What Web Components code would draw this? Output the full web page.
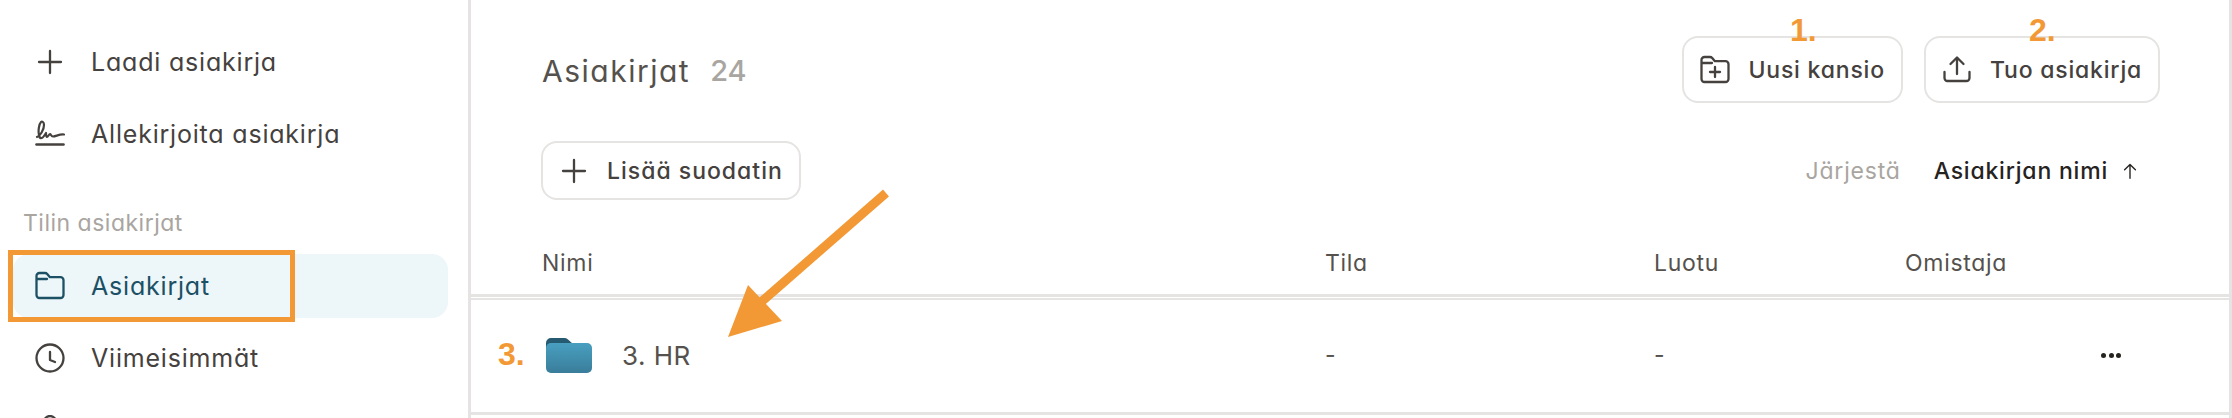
<!DOCTYPE html>
<html lang="fi">
<head>
<meta charset="utf-8">
<title>Asiakirjat</title>
<style>
	html, body {
		margin: 0;
		height: 418px;
		overflow: hidden;
		background: #fff;
	}
	body {
		font-family: Inter, "Noto Sans", sans-serif;
		font-feature-settings: "cv11";
		color: #45413e;
	}
</style>
</head>
<body>
<docs-page>
	<docs-sidebar slot="sidebar">
		<nav-item icon="plus">Laadi asiakirja</nav-item>
		<nav-item icon="sign">Allekirjoita asiakirja</nav-item>
		<nav-label>Tilin asiakirjat</nav-label>
		<nav-item icon="folder" active>Asiakirjat</nav-item>
		<nav-item icon="clock">Viimeisimmät</nav-item>
		<nav-item icon="user"></nav-item>
	</docs-sidebar>
	<docs-main slot="main">
		<docs-toolbar>
			<span slot="title">Asiakirjat</span>
			<span slot="count">24</span>
			<docs-button slot="actions" icon="folder-plus">Uusi kansio</docs-button>
			<docs-button slot="actions" icon="upload">Tuo asiakirja</docs-button>
		</docs-toolbar>
		<docs-filterbar></docs-filterbar>
		<docs-table></docs-table>
	</docs-main>
	<docs-annotations slot="over"></docs-annotations>
</docs-page>

<script>
	// shared icon set, stroke icons use currentColor
	const icons = {
		plus: '<path d="M15 4v22M4 15h22"/>',
		sign: '<path d="M1.500 25.500h27" stroke-width="2.600"/><path d="M2 18C5 17 9 11 9 6C9 3 7 2 6 3C4 5 3 12 4 16C4.500 20 7 20 9 17L11 14C11 16 11 18 12 18C13 18 14 15 15 15C16 15 16 17.500 18 17.500C21 17.500 24 15 29 15.500" stroke-width="2.200"/>',
		folder: '<path d="M1.500 8V5a3 3 0 0 1 3-3h5.500a3 3 0 0 1 2.200 1l2.300 2.800a1 1 0 0 0 .8.400H25.500a3 3 0 0 1 3 3V24a3 3 0 0 1-3 3h-21a3 3 0 0 1-3-3V8zM1.500 8H12"/>',
		clock: '<circle cx="15" cy="15" r="13.500"/><path d="M15 9v8l5 2"/>',
		user: '<circle cx="15" cy="7" r="6"/><path d="M4 28c1-7 6-10 11-10s10 3 11 10"/>',
		'folder-plus': '<path d="M1.500 8V5a3 3 0 0 1 3-3h5.500a3 3 0 0 1 2.200 1l2.300 2.800a1 1 0 0 0 .8.400H25.500a3 3 0 0 1 3 3V24a3 3 0 0 1-3 3h-21a3 3 0 0 1-3-3V8zM1.500 8H12M15 12v10M10 17h10"/>',
		upload: '<path d="M15 19V3M8.500 9L15 2.500 21.500 9M2.500 17v6a3 3 0 0 0 3 3h19a3 3 0 0 0 3-3v-6"/>',
		up: '<path d="M15 27V4M6 13l9-9 9 9"/>'
	};

	const iconSvg = (name, size = 30) =>
		`<svg width="${size}" height="${size}" viewBox="0 0 30 30" fill="none" stroke="currentColor" stroke-width="2.300" stroke-linecap="round" stroke-linejoin="round">${icons[name] || ''}</svg>`;

	class DocsPage extends HTMLElement {
		constructor() {
			super();
			this.attachShadow({mode: 'open'});
			this.shadowRoot.innerHTML = `
				<style>
					:host {
						display: grid;
						grid-template-columns: 471px 1fr;
						position: relative;
						height: 418px;
						overflow: hidden;
					}
					#side { border-right: 3px solid #e5e4e3; }
					#main { border-right: 3px solid #e5e4e3; min-width: 0; }
				</style>
				<div id="side"><slot name="sidebar"></slot></div>
				<div id="main"><slot name="main"></slot></div>
				<slot name="over"></slot>
			`;
		}
	}

	class DocsSidebar extends HTMLElement {
		constructor() {
			super();
			this.attachShadow({mode: 'open'});
			this.shadowRoot.innerHTML = `
				<style>
					:host {
						display: flex;
						flex-direction: column;
						gap: 8px;
						padding: 30px 20px 0 13px;
					}
				</style>
				<slot></slot>
			`;
		}
	}

	class NavItem extends HTMLElement {
		constructor() {
			super();
			this.attachShadow({mode: 'open'});
			this.shadowRoot.innerHTML = `
				<style>
					:host {
						display: flex;
						align-items: center;
						gap: 26px;
						height: 64px;
						flex: none;
						padding-left: 22px;
						border-radius: 16px;
						font-size: 25px;
						letter-spacing: .8px;
						color: #45413e;
					}
					:host([active]) {
						background: #edf6f9;
						color: #1c5064;
					}
					svg { display: block; flex: none; }
				</style>
				${iconSvg(this.getAttribute('icon'))}
				<span><slot></slot></span>
			`;
		}
	}

	class NavLabel extends HTMLElement {
		constructor() {
			super();
			this.attachShadow({mode: 'open'});
			this.shadowRoot.innerHTML = `
				<style>
					:host {
						display: block;
						flex: none;
						margin: 34px 0 8px 10px;
						line-height: 30px;
						font-size: 23px;
						letter-spacing: .5px;
						color: #a9a5a1;
					}
				</style>
				<slot></slot>
			`;
		}
	}

	class DocsMain extends HTMLElement {
		constructor() {
			super();
			this.attachShadow({mode: 'open'});
			this.shadowRoot.innerHTML = `
				<style>
					:host {
						display: flex;
						flex-direction: column;
						padding-top: 36px;
					}
				</style>
				<slot></slot>
			`;
		}
	}

	class DocsToolbar extends HTMLElement {
		constructor() {
			super();
			this.attachShadow({mode: 'open'});
			this.shadowRoot.innerHTML = `
				<style>
					:host {
						display: flex;
						align-items: center;
						height: 67px;
						padding: 0 69px 0 71px;
					}
					#title { font-size: 30px; letter-spacing: 1.500px; color: #55514d; padding-top: 2px; }
					#count { font-size: 29px; margin-left: 20px; color: #a9a5a1; font-weight: 500; padding-top: 2px; }
					#actions { display: flex; gap: 21px; margin-left: auto; }
				</style>
				<span id="title"><slot name="title"></slot></span>
				<span id="count"><slot name="count"></slot></span>
				<div id="actions"><slot name="actions"></slot></div>
			`;
		}
	}

	class DocsButton extends HTMLElement {
		constructor() {
			super();
			this.attachShadow({mode: 'open'});
			this.shadowRoot.innerHTML = `
				<style>
					:host {
						display: inline-flex;
						align-items: center;
						gap: 18px;
						box-sizing: border-box;
						height: var(--button-height, 67px);
						padding: 0 16px;
						border: 2px solid #e5e4e3;
						border-radius: 16px;
						font-size: 23px;
						letter-spacing: var(--button-spacing, .8px);
						font-weight: 500;
						color: #45413e;
						white-space: nowrap;
						background: #fff;
					}
					svg { display: block; flex: none; }
				</style>
				${iconSvg(this.getAttribute('icon'))}
				<span><slot></slot></span>
			`;
		}
	}

	class DocsFilterbar extends HTMLElement {
		constructor() {
			super();
			this.attachShadow({mode: 'open'});
			this.shadowRoot.innerHTML = `
				<style>
					:host {
						display: flex;
						align-items: center;
						height: 59px;
						margin-top: 38px;
						padding: 0 90px 0 70px;
						font-size: 23px;
						letter-spacing: .8px;
					}
					docs-button { --button-height: 59px; --button-spacing: 1px; }
					#sort { display: flex; align-items: center; margin-left: auto; }
					#sort-label { color: #a9a5a1; margin-right: 33px; }
					#sort-value { color: #26231f; font-weight: 500; margin-right: 13px; }
					svg { display: block; color: #26231f; }
				</style>
				<docs-button icon="plus">Lisää suodatin</docs-button>
				<div id="sort">
					<span id="sort-label">Järjestä</span>
					<span id="sort-value">Asiakirjan nimi</span>
					${iconSvg('up', 18)}
				</div>
			`;
		}
	}

	class DocsTable extends HTMLElement {
		constructor() {
			super();
			this.attachShadow({mode: 'open'});
			this.shadowRoot.innerHTML = `
				<style>
					:host { display: block; font-size: 23px; letter-spacing: .7px; color: #55514d; }
					.row {
						display: grid;
						grid-template-columns: 783px 329px 251px 196px 1fr;
						align-items: center;
						padding-left: 71px;
					}
					#head {
						height: 97px;
						padding-top: 32px;
						box-sizing: border-box;
						border-bottom: 3px solid #e5e4e3;
					}
					#body {
						height: 117px;
						box-sizing: border-box;
						border-top: 2px solid #e5e4e3;
						border-bottom: 3px solid #e5e4e3;
						margin-top: 1px;
						padding-bottom: 2px;
					}
					#name { display: flex; align-items: center; gap: 30px; padding-left: 4px; font-size: 26px; letter-spacing: .5px; }
					#dots { display: flex; gap: 2.500px; }
					#dots i { width: 5px; height: 5px; border-radius: 50%; background: #26231f; }
					svg { display: block; flex: none; }
				</style>
				<div class="row" id="head">
					<span>Nimi</span><span>Tila</span><span>Luotu</span><span>Omistaja</span><span></span>
				</div>
				<div class="row" id="body">
					<div id="name">
						<svg width="46" height="37" viewBox="0 0 46 37">
							<defs>
								<linearGradient id="fold" x1="0" y1="0" x2="0" y2="1">
									<stop offset="0" stop-color="#489fc0"/>
									<stop offset="1" stop-color="#397d9a"/>
								</linearGradient>
							</defs>
							<path d="M0 6a5 5 0 0 1 5-5h14a4 4 0 0 1 3 1.500L27 7v8H0z" fill="#265a70"/>
							<rect x="0" y="6" width="46" height="30" rx="5" fill="url(#fold)"/>
						</svg>
						<span>3. HR</span>
					</div>
					<span>-</span><span>-</span><span></span>
					<div id="dots"><i></i><i></i><i></i></div>
				</div>
			`;
		}
	}

	// the orange marks drawn on top of the screenshot
	class DocsAnnotations extends HTMLElement {
		constructor() {
			super();
			this.attachShadow({mode: 'open'});
			this.shadowRoot.innerHTML = `
				<style>
					:host { position: absolute; inset: 0; pointer-events: none; display: block; }
					.num {
						position: absolute;
						font: 700 32px/30px "Liberation Sans", Arial, sans-serif;
						color: #f29936;
					}
					#box {
						position: absolute;
						left: 8px;
						top: 250px;
						width: 277px;
						height: 62px;
						border: 5px solid #f29936;
					}
					svg { position: absolute; left: 0; top: 0; }
				</style>
				<div id="box"></div>
				<span class="num" style="left:1790px;top:15px">1.</span>
				<span class="num" style="left:2029px;top:15px">2.</span>
				<span class="num" style="left:498px;top:339px">3.</span>
				<svg width="2232" height="418" viewBox="0 0 2232 418">
					<path d="M886 193L760 303" stroke="#f29936" stroke-width="9" fill="none"/>
					<path d="M728 337L748 285L782 321z" fill="#f29936"/>
				</svg>
			`;
		}
	}

	customElements.define('docs-page', DocsPage);
	customElements.define('docs-sidebar', DocsSidebar);
	customElements.define('nav-item', NavItem);
	customElements.define('nav-label', NavLabel);
	customElements.define('docs-main', DocsMain);
	customElements.define('docs-toolbar', DocsToolbar);
	customElements.define('docs-button', DocsButton);
	customElements.define('docs-filterbar', DocsFilterbar);
	customElements.define('docs-table', DocsTable);
	customElements.define('docs-annotations', DocsAnnotations);
</script>
</body>
</html>
